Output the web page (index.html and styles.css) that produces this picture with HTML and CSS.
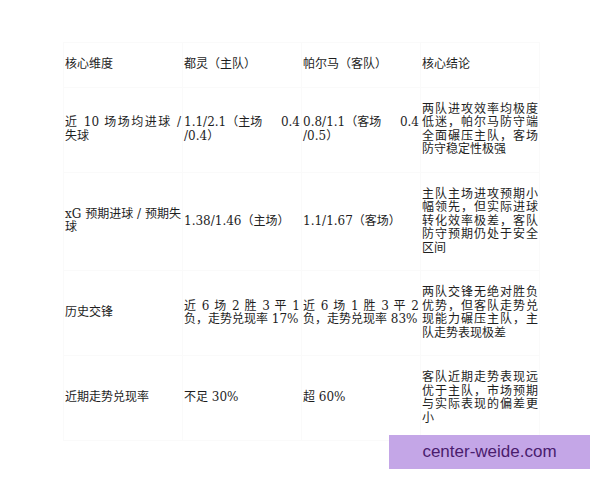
FILE: index.html
```html
<!DOCTYPE html>
<html lang="zh">
<head>
<meta charset="utf-8">
<link rel="stylesheet" href="styles.css">
</head>
<body>
<div class="page">
  <table class="grid">
    <colgroup>
      <col class="c1"><col class="c2"><col class="c3"><col class="c4">
    </colgroup>
    <tr>
      <td>核心维度</td>
      <td>都灵（主队）</td>
      <td>帕尔马（客队）</td>
      <td>核心结论</td>
    </tr>
    <tr>
      <td>近 10 场场均进球 / 失球</td>
      <td><span class="seg">1.1/2.1（主场</span> 0.4 /0.4）</td>
      <td><span class="seg">0.8/1.1（客场</span> 0.4 /0.5）</td>
      <td>两队进攻效率均极度低迷，帕尔马防守端全面碾压主队，客场防守稳定性极强</td>
    </tr>
    <tr>
      <td>xG 预期进球 / 预期失球</td>
      <td>1.38/1.46（主场）</td>
      <td>1.1/1.67（客场）</td>
      <td>主队主场进攻预期小幅领先，但实际进球转化效率极差，客队防守预期仍处于安全区间</td>
    </tr>
    <tr>
      <td>历史交锋</td>
      <td>近 6 场 2 胜 3 平 1 负，走势兑现率 17%</td>
      <td>近 6 场 1 胜 3 平 2 负，走势兑现率 83%</td>
      <td>两队交锋无绝对胜负优势，但客队走势兑现能力碾压主队，主队走势表现极差</td>
    </tr>
    <tr>
      <td>近期走势兑现率</td>
      <td>不足 30%</td>
      <td>超 60%</td>
      <td>客队近期走势表现远优于主队，市场预期与实际表现的偏差更小</td>
    </tr>
  </table>
  <div class="mark">center-weide.com</div>
</div>
</body>
</html>
```
FILE: styles.css
```css
html, body {
  margin: 0;
  padding: 0;
  background: #ffffff;
}
.page {
  position: relative;
  width: 600px;
  height: 480px;
  overflow: hidden;
}
.grid {
  border-collapse: collapse;
  table-layout: fixed;
  margin: 42px 0 0 63px;
  width: 476px;
  font-family: "DejaVu Serif", "Noto Sans CJK SC", serif;
  font-size: 12px;
  line-height: 13.5px;
  color: #1e1e1e;
}
.c1, .c2, .c3, .c4 { width: 119px; }
.grid td {
  border: 1px solid #fafafa;
  padding: 15px 1px;
  vertical-align: middle;
  text-align: justify;
  text-justify: inter-word;
}
.seg {
  display: inline-block;
}
.mark {
  position: absolute;
  left: 389px;
  top: 435px;
  width: 201px;
  height: 34px;
  background: #c4a6e7;
  color: #4a1c6e;
  font-family: "Liberation Sans", Arial, sans-serif;
  font-size: 17px;
  line-height: 34px;
  text-align: center;
}
```
